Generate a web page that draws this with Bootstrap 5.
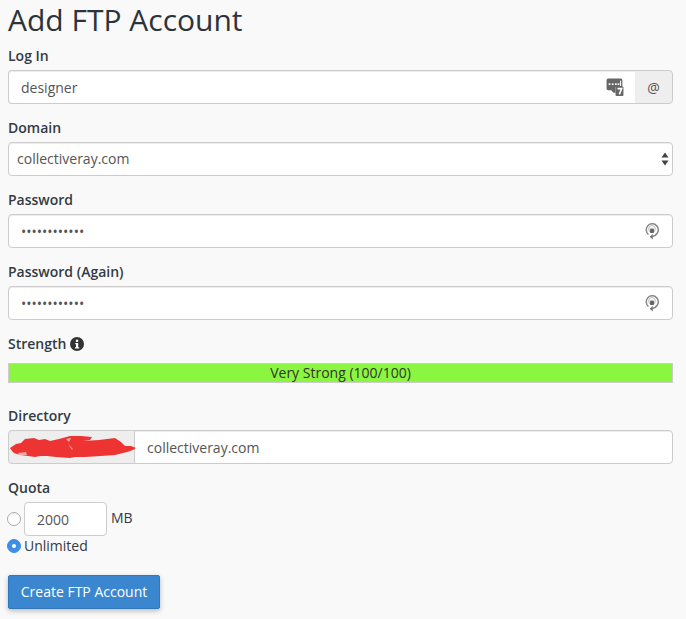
<!DOCTYPE html>
<html lang="en">
<head>
<meta charset="utf-8">
<title>Add FTP Account</title>
<link rel="stylesheet" href="https://cdn.jsdelivr.net/npm/bootstrap@5.3.0/dist/css/bootstrap.min.css">
<style>
html,body{height:100%;overflow:hidden}
body{background:#f9f9f9;font-family:"Open Sans",sans-serif;font-size:14px;color:#293a4a}
.page-wrap{padding:2px 13px 0 8px}
.page-title{font-family:"Open Sans",sans-serif;font-size:30px;line-height:36px;font-weight:400;color:#2d3339;margin:0 0 8px}
.field-group{margin-bottom:14px}
.field-label{display:block;font-size:14px;line-height:20px;font-weight:600;color:#333b44;margin:0 0 4px}
.field-input.form-control,.field-input.form-select{height:34px;font-size:14px;line-height:20px;color:#555;border:1px solid #ccc;border-radius:4px;padding:6px 12px;background-color:#fff;box-shadow:inset 0 1px 1px rgba(0,0,0,.075)}
.field-input.form-select{padding-left:8px;background-image:none}
.dots{letter-spacing:0;font-size:14px}
.addon.input-group-text{background:#eee;border:1px solid #ccc;color:#555;font-size:14px;border-radius:4px;padding:0;width:39px;justify-content:center;height:34px;flex:none}
.icon-over{position:absolute;top:50%;transform:translateY(-50%);z-index:6}
.has-icon{position:relative}
.has-icon.icon-kc{flex:1 1 auto;min-width:0}
.has-icon.icon-kc .field-input{border-top-right-radius:0;border-bottom-right-radius:0;border-right:0}
.has-icon.icon-kc + .addon{border-top-left-radius:0;border-bottom-left-radius:0}
.sel-arrows{right:4px;width:8px;height:14px}
.meter{height:20px;background:#8bf63f;border:1px solid #ccc;text-align:center;line-height:18px;font-size:14px;color:#333}
.meter-head{margin-bottom:9px}
.strength-sep{margin-bottom:23px}
.scribble-addon.input-group-text{width:127px;padding:0;background:#eee;border:1px solid #ccc;border-radius:4px 0 0 4px;height:34px;position:relative}
.scribble-mark{position:absolute;left:0;top:0;overflow:visible;z-index:7}
.dir-input.form-control{border-radius:0 4px 4px 0!important;margin-left:-1px}
.qline{height:34px}
.q-radio{width:14px;height:14px;border-radius:50%;border:1px solid #aaa;background:#fff;flex:none;display:inline-block;box-shadow:inset 0 1px 1px rgba(0,0,0,.05)}
.q-radio.on{background:#3d8fe8;border-color:#3d8fe8;position:relative}
.q-radio.on::after{content:"";position:absolute;left:4px;top:4px;width:4px;height:4px;border-radius:50%;background:#fff}
.q-input.form-control{width:83px;flex:none;height:34px;font-size:14px;color:#555;border:1px solid #ccc;border-radius:4px;padding:6px 12px;background:#fff;margin-left:3px}
.q-gap{margin-left:-1px}
.q-unit{margin:-2px 0 0 4px;color:#333b44;font-size:14px;line-height:20px}
.q-unl{height:20px;color:#333b44;font-weight:500;line-height:20px;font-size:14px;gap:3px;margin-left:-1px}
.create-btn.btn{margin-top:19px;height:34px;width:152px;padding:0;font-size:14px;line-height:32px;color:#fff;background:#3a87d0;border:1px solid #2f78bd;border-radius:2px;box-shadow:0 2px 5px rgba(0,0,0,.25)}
</style>
</head>
<body>
<div class="page-wrap">
  <h1 class="page-title">Add FTP Account</h1>

  <div class="field-group">
    <label class="field-label" for="login">Log In</label>
    <div class="input-group flex-nowrap">
      <div class="has-icon icon-kc">
        <input id="login" class="form-control field-input" value="designer">
        <svg class="icon-over" style="right:11px" width="18" height="19" viewBox="0 0 17 18" aria-hidden="true"><path d="M2 1h12a1.500 1.500 0 0 1 1.500 1.500V9h-6.500v5.500H7L5 12H2A1.500 1.500 0 0 1 .5 10.500v-8A1.500 1.500 0 0 1 2 1z" fill="#666"/><rect x="9" y="8.500" width="7.500" height="9" rx="1" fill="#666"/><path d="M10.800 10.500h4l-2.200 5.500" fill="none" stroke="#fff" stroke-width="1.500"/><g fill="#fff"><rect x="2.500" y="5.500" width="1.600" height="1.600"/><rect x="5.500" y="5.500" width="1.600" height="1.600"/><rect x="8.500" y="5.500" width="1.600" height="1.600"/><rect x="11" y="5.500" width="1.600" height="1.600"/><rect x="13.300" y="3" width="1" height="5"/></g></svg>
      </div>
      <span class="input-group-text addon">@</span>
    </div>
  </div>

  <div class="field-group">
    <label class="field-label" for="domain">Domain</label>
    <div class="has-icon">
      <select id="domain" class="form-select field-input"><option>collectiveray.com</option></select>
      <svg class="icon-over sel-arrows" viewBox="0 0 8 14" aria-hidden="true"><path d="M4 .5l3.500 5h-7zM4 13.500L.5 8.500h7z" fill="#444"/></svg>
    </div>
  </div>

  <div class="field-group">
    <label class="field-label" for="pw1">Password</label>
    <div class="has-icon">
      <input id="pw1" type="password" class="form-control field-input dots" value="............">
      <svg class="icon-over" style="right:14px" width="14" height="18" viewBox="0 0 14 18" aria-hidden="true"><path d="M3.500 12.500A6 6 0 1 1 12 11.500Q10.500 14 7.500 14.500" fill="none" stroke="#888" stroke-width="1.500"/><circle cx="7" cy="7" r="3.400" fill="none" stroke="#aaa" stroke-width=".8"/><rect x="5" y="6.500" width="4" height="4.500" rx="1" fill="#666"/><path d="M7.800 12v5.500L4.500 14.800z" fill="#777"/></svg>
    </div>
  </div>

  <div class="field-group">
    <label class="field-label" for="pw2">Password (Again)</label>
    <div class="has-icon">
      <input id="pw2" type="password" class="form-control field-input dots" value="............">
      <svg class="icon-over" style="right:14px" width="14" height="18" viewBox="0 0 14 18" aria-hidden="true"><path d="M3.500 12.500A6 6 0 1 1 12 11.500Q10.500 14 7.500 14.500" fill="none" stroke="#888" stroke-width="1.500"/><circle cx="7" cy="7" r="3.400" fill="none" stroke="#aaa" stroke-width=".8"/><rect x="5" y="6.500" width="4" height="4.500" rx="1" fill="#666"/><path d="M7.800 12v5.500L4.500 14.800z" fill="#777"/></svg>
    </div>
  </div>

  <div class="strength-sep">
    <div class="field-label meter-head d-flex align-items-center gap-1">Strength
      <svg width="14" height="14" viewBox="0 0 14 14" aria-hidden="true"><circle cx="7" cy="7" r="7" fill="#333"/><rect x="5.900" y="2.700" width="2.300" height="2.200" fill="#fff"/><path d="M5.200 6h3v4.200h1v1.300H5v-1.300h1V7.300h-.8z" fill="#fff"/></svg>
    </div>
    <div class="meter">Very Strong (100/100)</div>
  </div>

  <div class="field-group">
    <label class="field-label" for="dir">Directory</label>
    <div class="input-group flex-nowrap">
      <span class="input-group-text scribble-addon">
        <svg class="scribble-mark" width="127" height="32" viewBox="0 0 127 32" aria-hidden="true"><path d="M1 17L7 13L12 12L16 8L25 7L30 9L36 8L41 10L50 8L61 5L72 5L83 6L81 9L74 10L90 9L106 7L112 11L116 15L122 15L127 17L124 19L118 21L106 24L92 25L76 26L66 26L61 27L47 26L38 25L31 25L26 26L19 25L11 24L5 22L3 20z" fill="#ee3333"/><path d="M9 22L17 21L18 24L10 24zM57 8L62 7L60 11zM59 13L64 18L63 19z" fill="#f4a8a8"/></svg>
      </span>
      <input id="dir" class="form-control field-input dir-input" value="collectiveray.com">
    </div>
  </div>

  <div class="field-label">Quota</div>
  <div class="d-flex align-items-center qline">
    <input class="visually-hidden" type="radio" name="q" aria-label="Limited">
    <span class="q-radio q-gap"></span>
    <input class="form-control q-input" value="2000" aria-label="Quota in MB">
    <span class="q-unit">MB</span>
  </div>
  <div class="d-flex align-items-center q-unl"><span class="q-radio on"></span>Unlimited</div>

  <button class="btn create-btn" type="button">Create FTP Account</button>
</div>
<script src="https://cdn.jsdelivr.net/npm/bootstrap@5.3.0/dist/js/bootstrap.bundle.min.js"></script>
</body>
</html>
